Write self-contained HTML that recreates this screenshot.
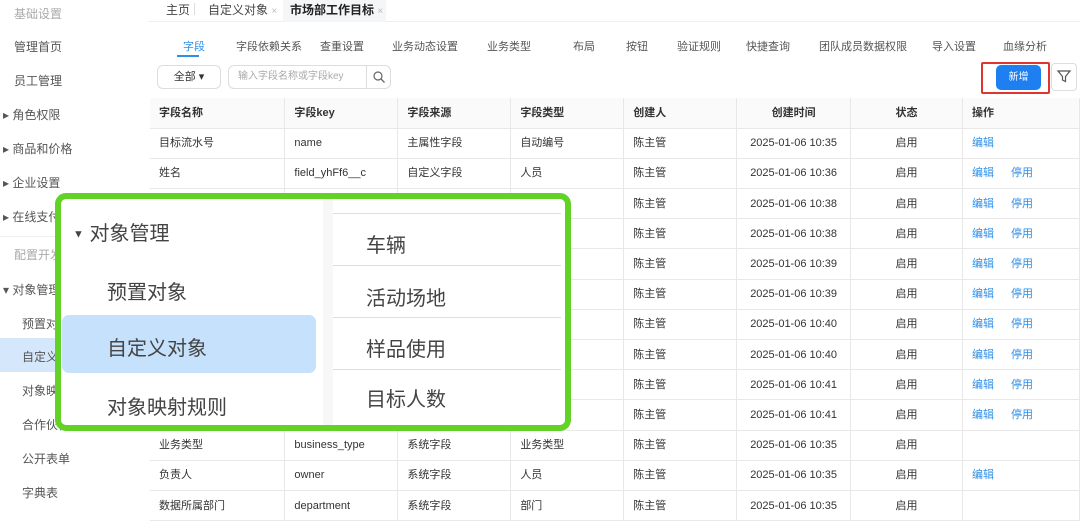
<!DOCTYPE html>
<html><head><meta charset="utf-8"><style>
*{margin:0;padding:0;box-sizing:border-box}
body{width:1080px;height:516px;overflow:hidden;background:#fff;font-family:"Liberation Sans","Noto Sans CJK SC",sans-serif;color:#333;position:relative}
.a{position:absolute;white-space:nowrap}
.sb{font-size:12px;color:#555}
.tab{font-size:11px;color:#555;top:38px}
table{position:absolute;left:150px;top:98px;border-collapse:collapse;font-size:11px;table-layout:fixed}
td{height:30.2px;line-height:14px;vertical-align:middle;border-bottom:1px solid #e8e8e8;border-right:1px solid #e8e8e8;padding-left:9px;color:#333;white-space:nowrap;overflow:hidden}
tr.h td{font-weight:bold;background:#fafafa;color:#333}
td.c{text-align:center;padding-left:0}
.l{color:#2e8fe8;margin-right:17px}
.ov{position:absolute;left:55px;top:193px;width:516px;height:238px;border:6px solid #62d227;border-radius:11px;background:#fff;overflow:hidden}
.ov .t{position:absolute;font-size:20px;color:#444;white-space:nowrap}
.rp{position:absolute;left:272px;width:228px;height:52px;border-top:1px solid #ddd;background:#fff}
</style></head><body>
<div class="a" style="left:0;top:0;width:148px;height:516px;background:#fff"></div>
<div class="a sb" style="left:14px;top:5px;color:#aaa">基础设置</div>
<div class="a sb" style="left:14px;top:38px">管理首页</div>
<div class="a sb" style="left:14px;top:72px">员工管理</div>
<div class="a sb" style="left:3px;top:106px">▸ 角色权限</div>
<div class="a sb" style="left:3px;top:140px">▸ 商品和价格</div>
<div class="a sb" style="left:3px;top:174px">▸ 企业设置</div>
<div class="a sb" style="left:3px;top:208px">▸ 在线支付</div>
<div class="a" style="left:0;top:236px;width:148px;border-top:1px solid #eee"></div>
<div class="a sb" style="left:14px;top:246px;color:#aaa">配置开发</div>
<div class="a sb" style="left:3px;top:281px">▾ 对象管理</div>
<div class="a sb" style="left:22px;top:315px">预置对象</div>
<div class="a" style="left:0;top:338px;width:148px;height:34px;background:#d5e8fb"></div>
<div class="a sb" style="left:22px;top:348px">自定义对象</div>
<div class="a sb" style="left:22px;top:382px">对象映射</div>
<div class="a sb" style="left:22px;top:416px">合作伙伴</div>
<div class="a sb" style="left:22px;top:450px">公开表单</div>
<div class="a sb" style="left:22px;top:484px">字典表</div>
<div class="a" style="left:148px;top:0;width:932px;height:22px;background:#fff;border-bottom:1px solid #f0f0f0"></div>
<div class="a" style="left:283px;top:0;width:103px;height:22px;background:#f4f6f8"></div>
<div class="a" style="left:166px;top:1px;font-size:12px;color:#444">主页</div>
<div class="a" style="left:194px;top:3px;height:12px;border-left:1px solid #ddd"></div>
<div class="a" style="left:208px;top:1px;font-size:12px;color:#444">自定义对象 <span style="color:#bbb;font-size:10px">×</span></div>
<div class="a" style="left:290px;top:1px;font-size:12px;font-weight:bold;color:#222">市场部工作目标 <span style="color:#bbb;font-size:10px;font-weight:normal">×</span></div>
<div class="a tab" style="left:183px;color:#2e8fe8">字段</div>
<div class="a" style="left:177px;top:55px;width:22px;height:2px;background:#2e8fe8"></div>
<div class="a tab" style="left:236px">字段依赖关系</div>
<div class="a tab" style="left:320px">查重设置</div>
<div class="a tab" style="left:392px">业务动态设置</div>
<div class="a tab" style="left:487px">业务类型</div>
<div class="a tab" style="left:573px">布局</div>
<div class="a tab" style="left:626px">按钮</div>
<div class="a tab" style="left:677px">验证规则</div>
<div class="a tab" style="left:746px">快捷查询</div>
<div class="a tab" style="left:819px">团队成员数据权限</div>
<div class="a tab" style="left:932px">导入设置</div>
<div class="a tab" style="left:1003px">血缘分析</div>
<div class="a" style="left:157px;top:65px;width:64px;height:24px;border:1px solid #ddd;border-radius:6px;font-size:11px;text-align:center;line-height:22px">全部 ▾</div>
<div class="a" style="left:228px;top:65px;width:163px;height:24px;border:1px solid #ddd;border-radius:6px;font-size:10px;color:#aaa;line-height:22px;padding-left:9px">输入字段名称或字段key</div>
<div class="a" style="left:366px;top:65px;width:1px;height:24px;background:#ddd"></div>
<svg class="a" style="left:372px;top:70px" width="14" height="14" viewBox="0 0 14 14"><circle cx="6" cy="6" r="4" fill="none" stroke="#666" stroke-width="1.2"/><path d="M9 9l3.5 3.5" stroke="#666" stroke-width="1.3"/></svg>
<div class="a" style="left:981px;top:62px;width:69px;height:32px;border:2px solid #e0342f;border-radius:2px"></div>
<div class="a" style="left:996px;top:65px;width:45px;height:25px;background:#1e7ff0;border-radius:5px;color:#fff;font-size:10px;text-align:center;line-height:25px">新增</div>
<div class="a" style="left:1051px;top:63px;width:26px;height:28px;border:1px solid #ddd;border-radius:4px"></div>
<svg class="a" style="left:1056px;top:68px" width="16" height="16" viewBox="0 0 16 16"><path d="M2 3h12l-4.5 5.5v5l-3-1.5v-3.5z" fill="none" stroke="#555" stroke-width="1.2"/></svg>
<table>
<colgroup><col style="width:135px"><col style="width:113px"><col style="width:113px"><col style="width:113px"><col style="width:113px"><col style="width:114px"><col style="width:112px"><col style="width:117px"></colgroup>
<tr class="h"><td>字段名称</td><td>字段key</td><td>字段来源</td><td>字段类型</td><td>创建人</td><td class="c">创建时间</td><td class="c">状态</td><td>操作</td></tr>
<tr><td>目标流水号</td><td>name</td><td>主属性字段</td><td>自动编号</td><td>陈主管</td><td class="c">2025-01-06 10:35</td><td class="c">启用</td><td><span class="l">编辑</span></td></tr>
<tr><td>姓名</td><td>field_yhFf6__c</td><td>自定义字段</td><td>人员</td><td>陈主管</td><td class="c">2025-01-06 10:36</td><td class="c">启用</td><td><span class="l">编辑</span><span class="l">停用</span></td></tr>
<tr><td></td><td></td><td></td><td></td><td>陈主管</td><td class="c">2025-01-06 10:38</td><td class="c">启用</td><td><span class="l">编辑</span><span class="l">停用</span></td></tr>
<tr><td></td><td></td><td></td><td></td><td>陈主管</td><td class="c">2025-01-06 10:38</td><td class="c">启用</td><td><span class="l">编辑</span><span class="l">停用</span></td></tr>
<tr><td></td><td></td><td></td><td></td><td>陈主管</td><td class="c">2025-01-06 10:39</td><td class="c">启用</td><td><span class="l">编辑</span><span class="l">停用</span></td></tr>
<tr><td></td><td></td><td></td><td></td><td>陈主管</td><td class="c">2025-01-06 10:39</td><td class="c">启用</td><td><span class="l">编辑</span><span class="l">停用</span></td></tr>
<tr><td></td><td></td><td></td><td></td><td>陈主管</td><td class="c">2025-01-06 10:40</td><td class="c">启用</td><td><span class="l">编辑</span><span class="l">停用</span></td></tr>
<tr><td></td><td></td><td></td><td></td><td>陈主管</td><td class="c">2025-01-06 10:40</td><td class="c">启用</td><td><span class="l">编辑</span><span class="l">停用</span></td></tr>
<tr><td></td><td></td><td></td><td></td><td>陈主管</td><td class="c">2025-01-06 10:41</td><td class="c">启用</td><td><span class="l">编辑</span><span class="l">停用</span></td></tr>
<tr><td></td><td></td><td></td><td></td><td>陈主管</td><td class="c">2025-01-06 10:41</td><td class="c">启用</td><td><span class="l">编辑</span><span class="l">停用</span></td></tr>
<tr><td>业务类型</td><td>business_type</td><td>系统字段</td><td>业务类型</td><td>陈主管</td><td class="c">2025-01-06 10:35</td><td class="c">启用</td><td></td></tr>
<tr><td>负责人</td><td>owner</td><td>系统字段</td><td>人员</td><td>陈主管</td><td class="c">2025-01-06 10:35</td><td class="c">启用</td><td><span class="l">编辑</span></td></tr>
<tr><td>数据所属部门</td><td>department</td><td>系统字段</td><td>部门</td><td>陈主管</td><td class="c">2025-01-06 10:35</td><td class="c">启用</td><td></td></tr>
</table>
<div class="ov">
<div class="t" style="left:12px;top:18px"><span style="font-size:11px;vertical-align:middle">▼</span> 对象管理</div>
<div class="t" style="left:46px;top:77px">预置对象</div>
<div style="position:absolute;left:1px;top:116px;width:254px;height:58px;background:#c5e1fb;border-radius:7px"></div>
<div class="t" style="left:46px;top:133px">自定义对象</div>
<div class="t" style="left:46px;top:192px">对象映射规则</div>
<div style="position:absolute;left:262px;top:0;width:10px;height:226px;background:#f7f7f7"></div>
<div class="rp" style="top:14px"></div>
<div class="rp" style="top:66px"></div>
<div class="rp" style="top:118px"></div>
<div class="rp" style="top:170px"></div>
<div class="t" style="left:305px;top:30px">车辆</div>
<div class="t" style="left:305px;top:83px">活动场地</div>
<div class="t" style="left:305px;top:134px">样品使用</div>
<div class="t" style="left:305px;top:184px">目标人数</div>
</div>
</body></html>
